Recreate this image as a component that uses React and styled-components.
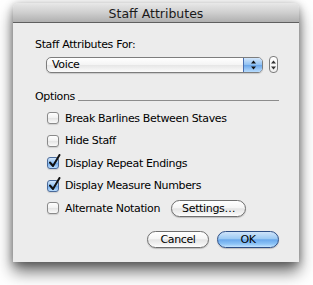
import React from 'react';
import styled, { createGlobalStyle } from 'styled-components';

// Aqua-era "Staff Attributes" sheet, laid out by flow.

const GlobalStyle = createGlobalStyle`
   html, body {
      margin: 0;
      padding: 0;
      background: #ffffff;
   }
   body {
      font-family: "DejaVu Sans", "Liberation Sans", sans-serif;
      font-size: 11px;
      letter-spacing: -0.35px;
      color: #000;
   }
`;

const Page = styled.div`
   width: 313px;
   height: 285px;
   padding: 3px 0 0 13px;
   box-sizing: border-box;
   overflow: hidden;
`;

const Window = styled.div`
   width: 286px;
   height: 259px;
   background: #ececec;
   border-radius: 5px 5px 0 0;
   box-shadow: 0 10px 16px rgba(0, 0, 0, 0.55), 0 2px 9px rgba(0, 0, 0, 0.35);
   display: flex;
   flex-direction: column;
   overflow: hidden;
`;

const TitleBar = styled.div`
   height: 20px;
   border-bottom: 1px solid #5f5f5f;
   background: linear-gradient(#e8e8e8, #cfcfcf 50%, #b0b0b0);
   border-radius: 5px 5px 0 0;
   display: flex;
   align-items: center;
   justify-content: center;
   font-size: 12.5px;
   letter-spacing: 0;
   color: #1a1a1a;
   padding-top: 1px;
   box-sizing: border-box;
`;

const Content = styled.div`
   flex: 1;
   padding: 15px 20px 0 22px;
   display: flex;
   flex-direction: column;
`;

const Label = styled.div`
   line-height: 14px;
   height: 14px;
`;

const PopupRow = styled.div`
   display: flex;
   align-items: center;
   margin: 4px 0 0 11px;
   gap: 6px;
`;

const Popup = styled.div`
   width: 217px;
   height: 16px;
   box-sizing: border-box;
   border: 1px solid #7d7d7d;
   border-radius: 5px;
   background: linear-gradient(#ffffff, #f4f4f4 50%, #e6e6e6 51%, #fbfbfb);
   display: flex;
   overflow: hidden;
   box-shadow: 0 1px 1px rgba(0, 0, 0, 0.15);
`;

const PopupText = styled.div`
   flex: 1;
   padding-left: 5px;
   line-height: 14px;
`;

const PopupArrows = styled.div`
   width: 18px;
   border-left: 1px solid #4a6fb0;
   background: linear-gradient(#d3e6fb, #8ec0f2 50%, #6aa6ea 51%, #b8dcfd);
   display: flex;
   align-items: center;
   justify-content: center;
`;

const Stepper = styled.div`
   width: 9px;
   height: 17px;
   box-sizing: border-box;
   border: 1px solid #7d7d7d;
   border-radius: 4px;
   background: linear-gradient(#ffffff, #efefef);
   display: flex;
   align-items: center;
   justify-content: center;
`;

const SectionHead = styled.div`
   display: flex;
   align-items: flex-end;
   margin-top: 17px;
   line-height: 14px;
   height: 14px;
`;

const Rule = styled.div`
   flex: 1;
   height: 1px;
   background: #8c8c8c;
   margin: 0 0 3px 3px;
`;

const Options = styled.div`
   margin: 3px 0 0 12px;
   display: flex;
   flex-direction: column;
`;

const OptionRow = styled.div`
   height: 22.5px;
   display: flex;
   align-items: center;
   gap: 6px;
`;

const Box = styled.div`
   position: relative;
   width: 12px;
   height: 12px;
   box-sizing: border-box;
   border: 1px solid ${p => (p.checked ? '#4a6a9a' : '#8a8a8a')};
   border-radius: 3px;
   background: ${p =>
      p.checked
         ? 'linear-gradient(#d0e5fb, #8fc0f1 50%, #6ea8e9 51%, #b9dcfc)'
         : 'linear-gradient(#ffffff, #f1f1f1 50%, #e4e4e4 51%, #fafafa)'};
   box-shadow: 0 1px 1px rgba(0, 0, 0, 0.12);
   flex: none;
`;

const Tick = styled.svg`
   position: absolute;
   left: 0px;
   top: -4px;
`;

const PushButton = styled.div`
   height: 17px;
   width: ${p => p.width}px;
   margin-left: ${p => p.offset || 0}px;
   box-sizing: border-box;
   border: 1px solid ${p => (p.primary ? '#2e4f86' : '#6f6f6f')};
   border-radius: 9px;
   background: ${p =>
      p.primary
         ? 'linear-gradient(#cfe4fa, #9ccaf4 45%, #6aa8ec 52%, #8cc3f6 80%, #c4e4ff)'
         : 'linear-gradient(#ffffff, #f5f5f5 45%, #e4e4e4 52%, #f4f4f4 85%, #ffffff)'};
   box-shadow: 0 1px 1px rgba(0, 0, 0, 0.2);
   display: flex;
   align-items: center;
   justify-content: center;
   line-height: 15px;
   flex: none;
`;

const ButtonBar = styled.div`
   display: flex;
   justify-content: flex-end;
   gap: 8px;
   margin-top: 11px;
`;

const UpDown = ({ color = '#111' }) => (
   <svg width="5" height="10" viewBox="0 0 5 10">
      <polygon points="2.5,0.5 5,3.5 0,3.5" fill={color} />
      <polygon points="0,6.5 5,6.5 2.5,9.5" fill={color} />
   </svg>
);

const Check = ({ checked, label, children }) => (
   <OptionRow>
      <Box checked={checked}>
         {checked && (
            <Tick width="13" height="14" viewBox="0 0 13 14">
               <path
                  d="M2 8.5 L5 12 L11.5 1"
                  fill="none"
                  stroke="#111"
                  strokeWidth="2"
                  strokeLinecap="round"
                  strokeLinejoin="round"
               />
            </Tick>
         )}
      </Box>
      <span>{label}</span>
      {children}
   </OptionRow>
);

const App = function App() {
   return (
      <Page>
         <GlobalStyle />
         <Window>
            <TitleBar>Staff Attributes</TitleBar>
            <Content>
               <Label>Staff Attributes For:</Label>
               <PopupRow>
                  <Popup>
                     <PopupText>Voice</PopupText>
                     <PopupArrows>
                        <UpDown />
                     </PopupArrows>
                  </Popup>
                  <Stepper>
                     <UpDown color="#333" />
                  </Stepper>
               </PopupRow>

               <SectionHead>
                  <span>Options</span>
                  <Rule />
               </SectionHead>

               <Options>
                  <Check label="Break Barlines Between Staves" />
                  <Check label="Hide Staff" />
                  <Check checked label="Display Repeat Endings" />
                  <Check checked label="Display Measure Numbers" />
                  <Check label="Alternate Notation">
                     <PushButton width={75} offset={5}>Settings…</PushButton>
                  </Check>
               </Options>

               <ButtonBar>
                  <PushButton width={62}>Cancel</PushButton>
                  <PushButton width={62} primary>OK</PushButton>
               </ButtonBar>
            </Content>
         </Window>
      </Page>
   );
};

export default App;
